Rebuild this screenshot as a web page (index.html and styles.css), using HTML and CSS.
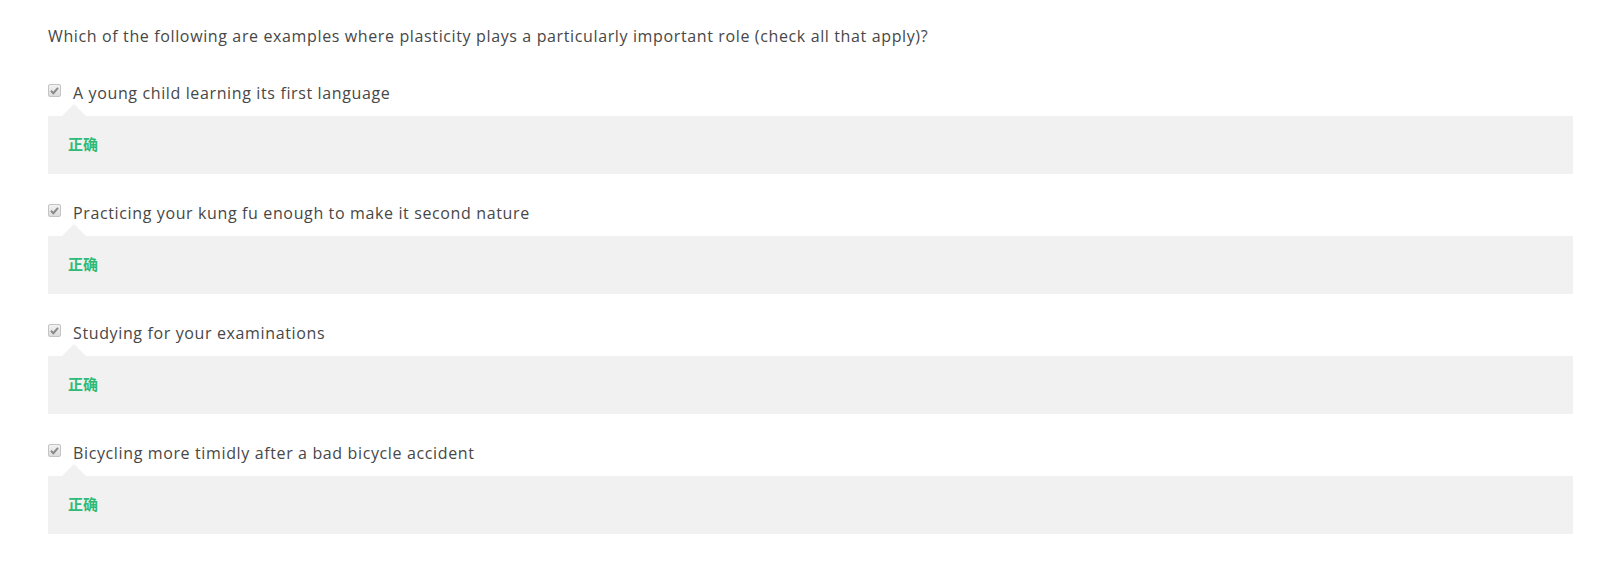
FILE: index.html
```html
<!DOCTYPE html>
<html>
<head>
<meta charset="utf-8">
<link rel="stylesheet" href="styles.css">
</head>
<body>
<div class="quiz">
  <p class="question">Which of the following are examples where plasticity plays a particularly important role (check all that apply)?</p>
  <div class="options">
    <div class="option">
      <div class="label"><span class="box"><svg viewBox="0 0 13 13" width="13" height="13"><path d="M3 6.8 L5.4 9.2 L10 3.8" fill="none" stroke="#8a8a8a" stroke-width="2"/></svg></span><span class="text">A young child learning its first language</span></div>
      <div class="feedback">正确</div>
    </div>
    <div class="option">
      <div class="label"><span class="box"><svg viewBox="0 0 13 13" width="13" height="13"><path d="M3 6.8 L5.4 9.2 L10 3.8" fill="none" stroke="#8a8a8a" stroke-width="2"/></svg></span><span class="text">Practicing your kung fu enough to make it second nature</span></div>
      <div class="feedback">正确</div>
    </div>
    <div class="option">
      <div class="label"><span class="box"><svg viewBox="0 0 13 13" width="13" height="13"><path d="M3 6.8 L5.4 9.2 L10 3.8" fill="none" stroke="#8a8a8a" stroke-width="2"/></svg></span><span class="text">Studying for your examinations</span></div>
      <div class="feedback">正确</div>
    </div>
    <div class="option">
      <div class="label"><span class="box"><svg viewBox="0 0 13 13" width="13" height="13"><path d="M3 6.8 L5.4 9.2 L10 3.8" fill="none" stroke="#8a8a8a" stroke-width="2"/></svg></span><span class="text">Bicycling more timidly after a bad bicycle accident</span></div>
      <div class="feedback">正确</div>
    </div>
  </div>
</div>
</body>
</html>
```
FILE: styles.css
```css
html, body {
  margin: 0;
  padding: 0;
  background: #fff;
}
body {
  font-family: "Open Sans", "Noto Sans CJK SC", sans-serif;
  color: #474747;
}
.quiz {
  padding: 26px 28px 0 48px;
}
.question {
  margin: 0;
  font-size: 16px;
  letter-spacing: 0.63px;
  line-height: 20px;
}
.options {
  margin-top: 37px;
  display: flex;
  flex-direction: column;
  gap: 29px;
}
.option {
  display: flex;
  flex-direction: column;
  gap: 13px;
}
.label {
  display: flex;
  align-items: flex-start;
  font-size: 16px;
  letter-spacing: 0.63px;
  line-height: 20px;
}
.box {
  width: 11px;
  height: 11px;
  margin-top: 1px;
  margin-right: 12px;
  border: 1px solid #c4c4c4;
  border-radius: 2px;
  background: linear-gradient(#f2f2f2, #dcdcdc);
  display: flex;
  align-items: center;
  justify-content: center;
  overflow: hidden;
}
.box svg {
  display: block;
  flex: none;
}
.feedback {
  position: relative;
  background: #f1f1f1;
  padding: 18px 20px 20px;
  font-size: 15px;
  line-height: 20px;
  font-weight: 700;
  color: #2fbb76;
}
.feedback::before {
  content: "";
  position: absolute;
  left: 14px;
  top: -12px;
  border-left: 12px solid transparent;
  border-right: 12px solid transparent;
  border-bottom: 12px solid #f1f1f1;
}
```
